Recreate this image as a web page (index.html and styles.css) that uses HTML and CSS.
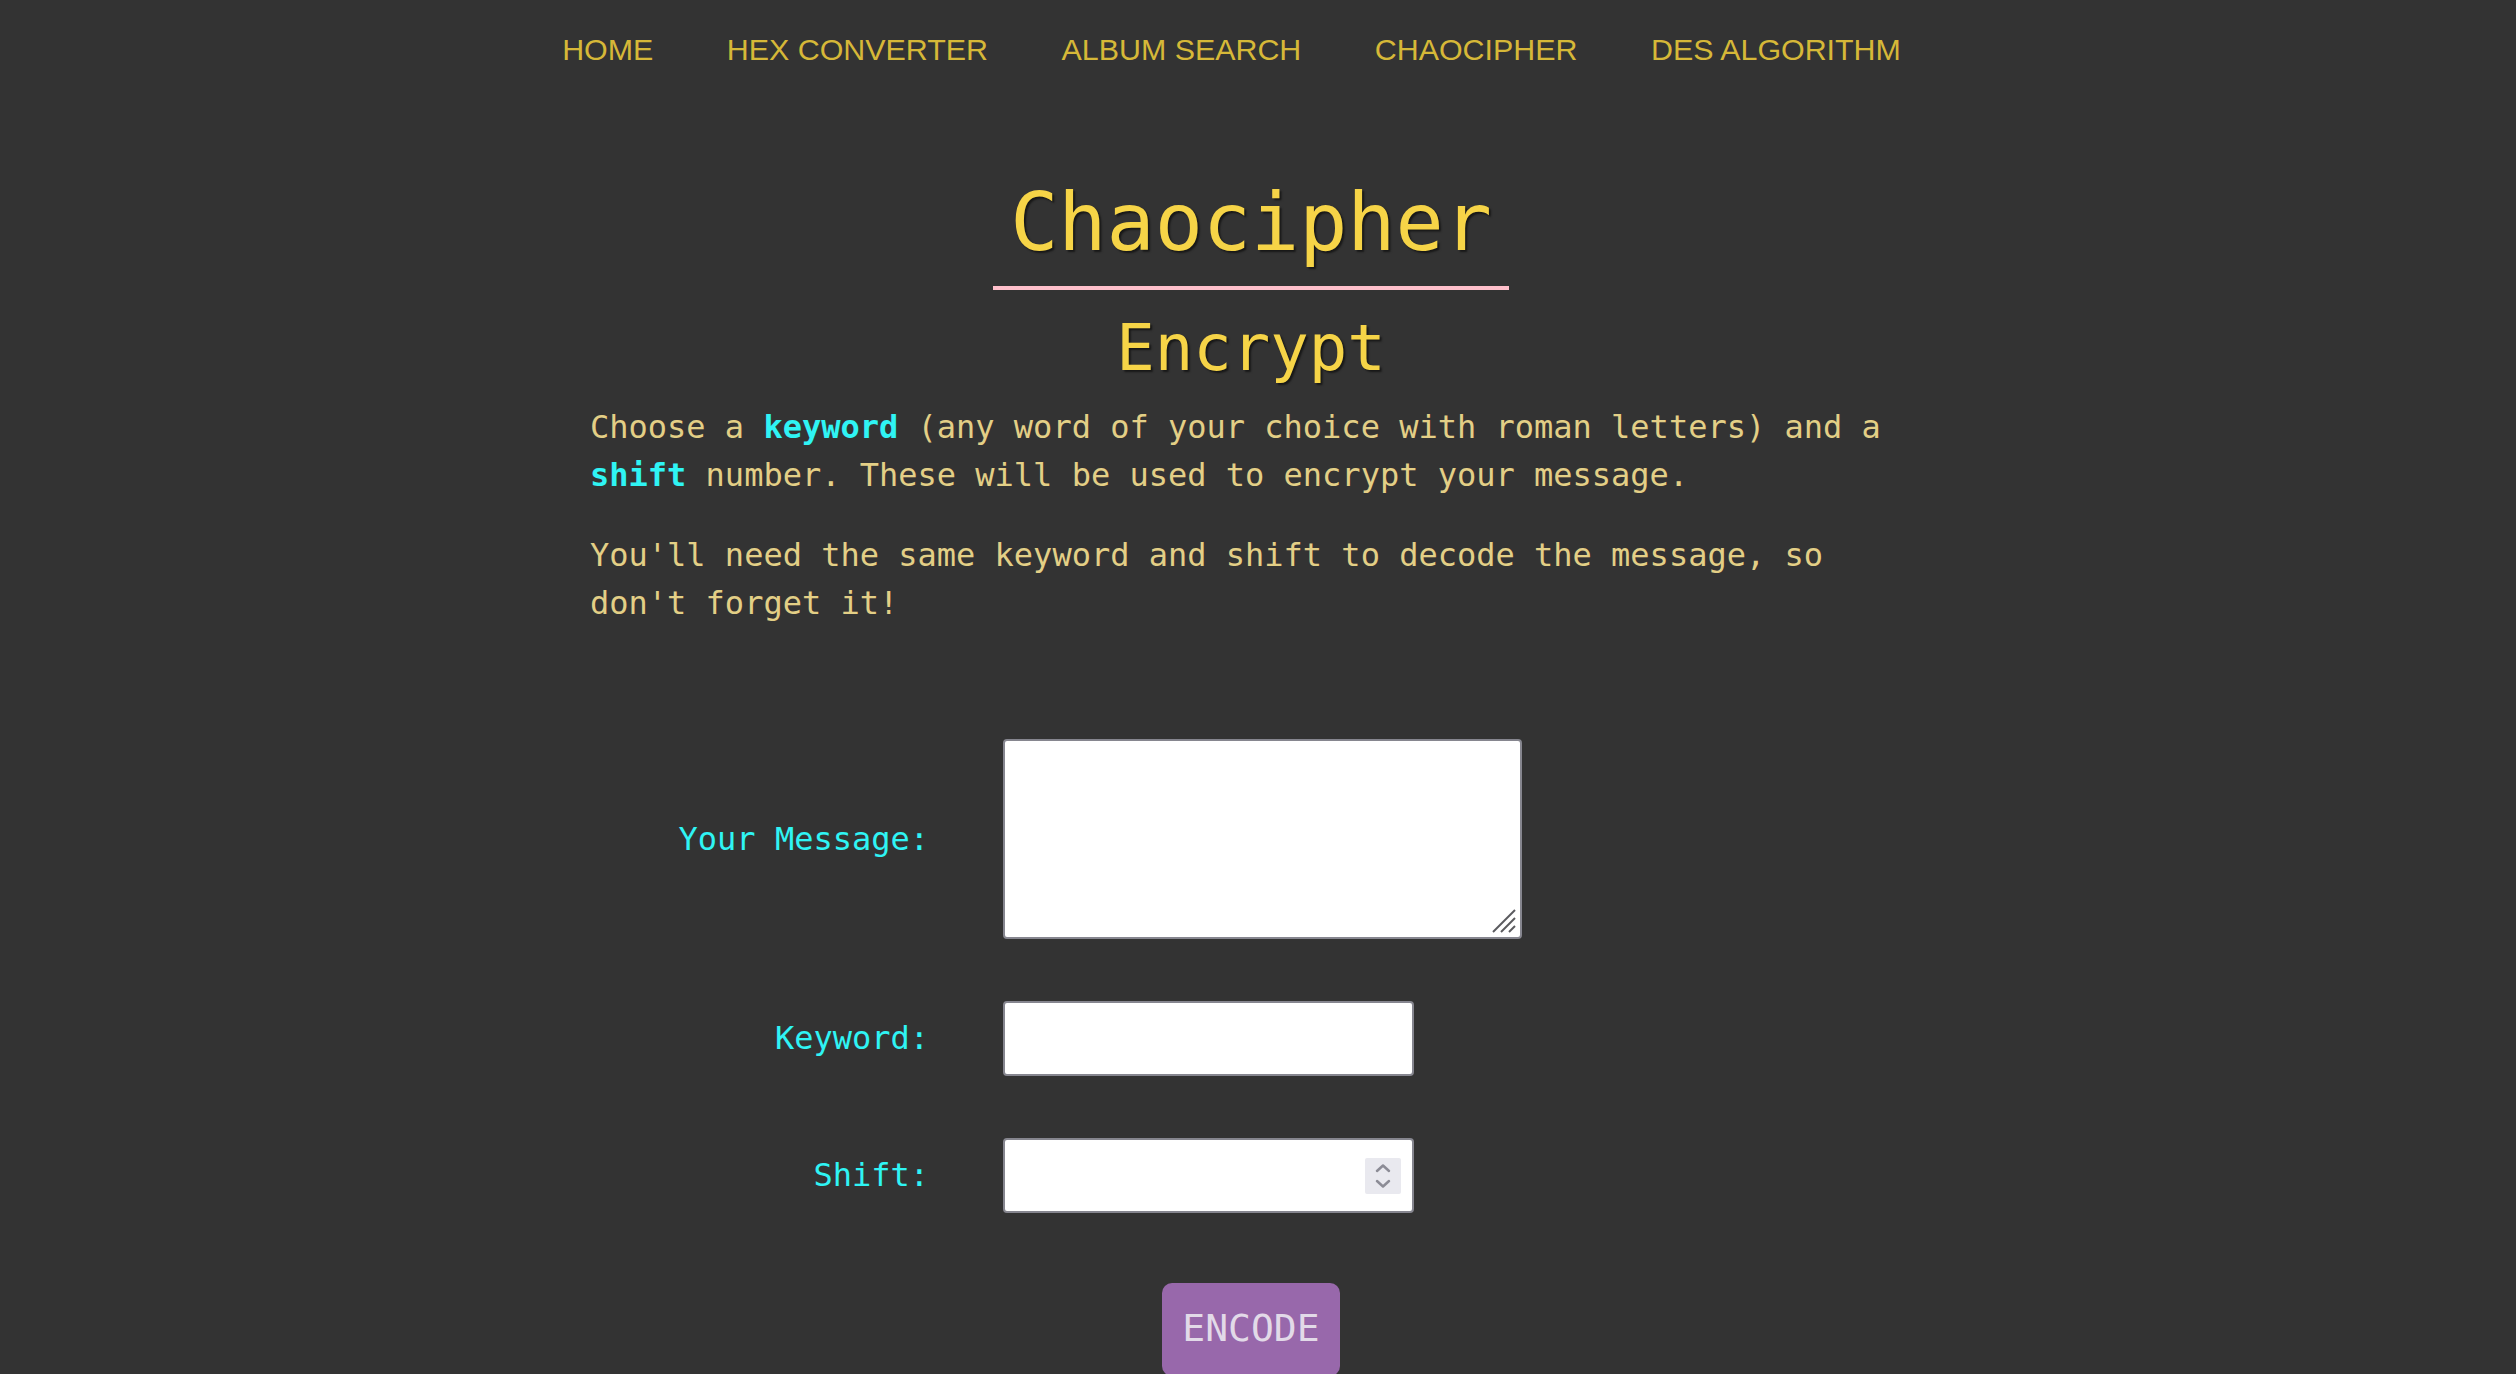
FILE: index.html
```html
<!DOCTYPE html>
<html lang="en">
<head>
<meta charset="utf-8">
<title>Chaocipher</title>
<link rel="stylesheet" href="styles.css">
</head>
<body>
<nav class="nav">
  <a class="nav-link" href="#">HOME</a>
  <a class="nav-link" href="#">HEX CONVERTER</a>
  <a class="nav-link" href="#">ALBUM SEARCH</a>
  <a class="nav-link" href="#">CHAOCIPHER</a>
  <a class="nav-link" href="#">DES ALGORITHM</a>
</nav>
<main class="page">
  <header class="heading">
    <h1 class="title">Chaocipher</h1>
    <h2 class="subtitle">Encrypt</h2>
  </header>
  <p class="intro">Choose a <strong class="hl">keyword</strong> (any word of your choice with roman letters) and a <strong class="hl">shift</strong> number. These will be used to encrypt your message.</p>
  <p class="intro">You'll need the same keyword and shift to decode the message, so don't forget it!</p>
  <form class="form">
    <label class="label" for="msg">Your Message:</label>
    <span class="field-wrap">
      <textarea class="textarea" id="msg"></textarea>
      <svg class="resize" width="26" height="26" viewBox="0 0 26 26" aria-hidden="true">
        <line x1="2" y1="24" x2="24" y2="2" />
        <line x1="10" y1="24" x2="24" y2="10" />
        <line x1="18" y1="24" x2="24" y2="18" />
      </svg>
    </span>
    <label class="label" for="kw">Keyword:</label>
    <span class="field-wrap">
      <input class="input" id="kw" type="text">
    </span>
    <label class="label" for="sh">Shift:</label>
    <span class="field-wrap">
      <input class="input number" id="sh" type="number">
      <span class="stepper" aria-hidden="true">
        <svg width="36" height="36" viewBox="0 0 36 36">
          <polyline points="12,13 18,7.5 24,13" />
          <polyline points="12,23 18,28.5 24,23" />
        </svg>
      </span>
    </span>
    <div class="actions">
      <button class="btn" type="button">ENCODE</button>
    </div>
  </form>
</main>
</body>
</html>
```

FILE: styles.css
```css
html, body {
  margin: 0;
  background: #333333;
}

body {
  padding-right: 14px;
  font-family: "DejaVu Sans Mono", monospace;
  overflow: hidden;
  height: 1374px;
  box-sizing: border-box;
}

.nav {
  display: flex;
  justify-content: center;
  gap: 73.5px;
  padding: 32px 39px 0 0;
  font-family: "Liberation Sans", Arial, sans-serif;
  font-size: 30.4px;
  line-height: 34px;
}

.nav-link {
  color: #d6b838;
  text-decoration: none;
}

.page {
  width: 1322px;
  margin: 0 auto;
}

.heading {
  display: flex;
  flex-direction: column;
  align-items: center;
}

.title {
  margin: 109px 0 0;
  padding: 0 17px 15px;
  font-size: 80px;
  line-height: 1.2;
  font-weight: normal;
  color: #f6d447;
  border-bottom: 4px solid #ffc0cb;
  text-shadow: 2px 2px 2px rgba(0, 0, 0, 0.55);
}

.subtitle {
  margin: 20px 0 0;
  font-size: 64px;
  line-height: 1.2;
  font-weight: normal;
  color: #f6d447;
  text-shadow: 2px 2px 2px rgba(0, 0, 0, 0.55);
}

.intro {
  margin: 32px 0 0;
  font-size: 32px;
  line-height: 48px;
  color: #e3cf86;
}

.heading + .intro {
  margin-top: 16px;
}

.hl {
  color: #2ff4f4;
  font-weight: bold;
}

.form {
  display: grid;
  grid-template-columns: 339px 519px;
  column-gap: 74px;
  row-gap: 62px;
  align-items: center;
  margin-top: 112px;
}

.label {
  text-align: right;
  font-size: 32px;
  color: #2ff4f4;
}

.field-wrap {
  position: relative;
  display: block;
}

.textarea,
.input {
  display: block;
  box-sizing: border-box;
  margin: 0;
  background: #ffffff;
  border: 2px solid #86868f;
  border-radius: 4px;
  font-family: "DejaVu Sans Mono", monospace;
  font-size: 28px;
  outline: none;
}

.textarea {
  width: 519px;
  height: 200px;
  resize: none;
}

.input {
  width: 411px;
  height: 75px;
}

.number {
  -moz-appearance: textfield;
  appearance: textfield;
}

.number::-webkit-inner-spin-button,
.number::-webkit-outer-spin-button {
  -webkit-appearance: none;
  margin: 0;
}

.resize {
  position: absolute;
  right: 5px;
  bottom: 5px;
  stroke: #5a5a5e;
  stroke-width: 2;
}

.stepper {
  position: absolute;
  left: 362px;
  top: 20px;
  width: 36px;
  height: 36px;
  background: #e9e9ef;
  border-radius: 2px;
}

.stepper svg {
  display: block;
  fill: none;
  stroke: #8c8c96;
  stroke-width: 2.5;
  stroke-linecap: round;
  stroke-linejoin: round;
}

.actions {
  grid-column: 1 / -1;
  display: flex;
  justify-content: center;
  width: 1322px;
  margin-top: 8px;
}

.btn {
  padding: 23px 20px 26px;
  border: none;
  border-radius: 10px;
  background: #9868ab;
  color: #e2dae8;
  font-family: "DejaVu Sans Mono", monospace;
  font-size: 38px;
  line-height: 44px;
  cursor: pointer;
}
```
